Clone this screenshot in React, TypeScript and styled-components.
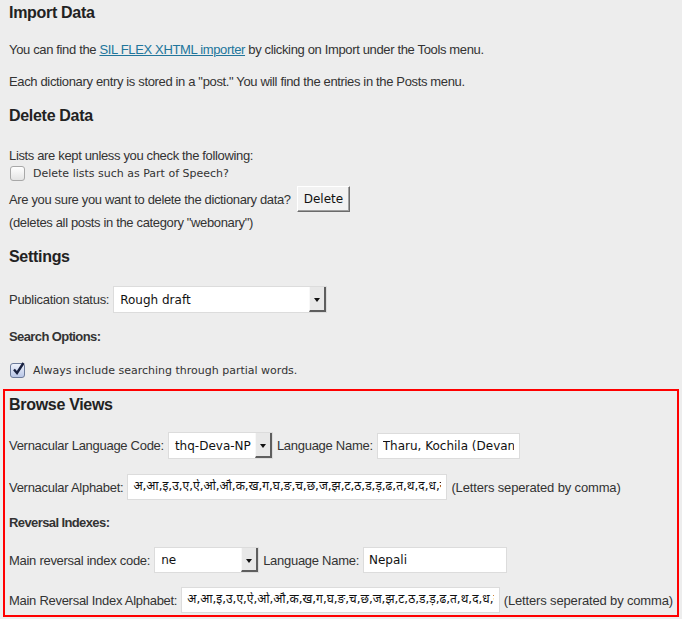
import React from 'react';
import styled, { createGlobalStyle } from 'styled-components';

const GlobalStyle = createGlobalStyle`
  body {
    margin: 0;
    background: #ededed;
    color: #333;
    font-family: 'Liberation Sans', Arial, sans-serif;
    font-size: 13px;
    letter-spacing: -0.35px;
  }
`;

const Page = styled.div`
  padding: 0 3px;
  width: 676px;
`;

const Section = styled.div`
  padding-left: 6px;
`;

const Heading = styled.h3<{ $top?: number }>`
  margin: ${p => p.$top ?? 0}px 0 0;
  height: 26px;
  line-height: 26px;
  font-size: 16px;
  font-weight: bold;
  letter-spacing: -0.3px;
  color: #222;
`;

const Line = styled.div<{ $h?: number; $top?: number }>`
  display: flex;
  align-items: center;
  gap: 4px;
  height: ${p => p.$h ?? 20}px;
  margin-top: ${p => p.$top ?? 0}px;
  white-space: nowrap;
`;

const SubTitle = styled(Line)`
  font-weight: bold;
  letter-spacing: -0.6px;
  color: #333;
`;

const Link = styled.a`
  color: #21759b;
  text-decoration: underline;
`;

const Label = styled.span`
  color: #333;
  letter-spacing: -0.28px;
`;

const CheckLabel = styled.label`
  display: flex;
  align-items: center;
  gap: 8px;
  font-family: 'DejaVu Sans', sans-serif;
  font-size: 11px;
  letter-spacing: 0;
  color: #333;
`;

const Box = styled.span<{ $checked?: boolean }>`
  width: 13px;
  height: 13px;
  margin-left: 1px;
  border: 1px solid ${p => (p.$checked ? '#6b7a99' : '#a8a8a8')};
  border-radius: 3px;
  background: ${p =>
    p.$checked
      ? 'linear-gradient(#eef2fb, #b9c6e6)'
      : 'linear-gradient(#ffffff, #e4e4e4)'};
  position: relative;
  svg {
    position: absolute;
    left: 0px;
    top: -3px;
  }
`;

const Button = styled.button`
  height: 26px;
  padding: 0 6px;
  margin-left: 2px;
  font-family: 'DejaVu Sans', sans-serif;
  font-size: 12px;
  letter-spacing: 0;
  color: #111;
  background: #f2f2f2;
  border: 1px solid;
  border-color: #ffffff #6b6b6b #6b6b6b #ffffff;
  box-shadow: inset -1px -1px 0 #a0a0a0;
`;

const Select = styled.div<{ $w: number; $h?: number }>`
  display: flex;
  width: ${p => p.$w}px;
  height: ${p => p.$h ?? 26}px;
  box-sizing: border-box;
  background: #fff;
  border: 1px solid #dcdcdc;
  font-family: 'DejaVu Sans', sans-serif;
  font-size: 12px;
  letter-spacing: 0;
  color: #111;
`;

const SelectValue = styled.span`
  flex: 1;
  padding-left: 6px;
  display: flex;
  align-items: center;
`;

const Arrow = styled.span`
  width: 14px;
  display: flex;
  align-items: center;
  justify-content: center;
  background: #e8e8e8;
  border-left: 1px solid #f8f8f8;
  border-right: 2px solid #5e5e5e;
  border-bottom: 2px solid #5e5e5e;
  &::after {
    content: '';
    border-left: 3px solid transparent;
    border-right: 3px solid transparent;
    border-top: 4px solid #111;
    margin-top: 3px;
  }
`;

const TextInput = styled.input<{ $w: number }>`
  width: ${p => p.$w}px;
  height: 26px;
  box-sizing: border-box;
  margin: 0;
  padding: 0 5px;
  background: #fff;
  border: 1px solid #dcdcdc;
  outline: none;
  font-family: 'DejaVu Sans', 'Noto Sans Devanagari', 'Lohit Devanagari', sans-serif;
  font-size: 12px;
  letter-spacing: 0;
  color: #111;
`;

const Frame = styled.div`
  margin-top: 10px;
  border: 2px solid #ff0000;
  padding: 1px 4px 2px 4px;
`;

const Hint = styled.span`
  color: #333;
  letter-spacing: -0.15px;
`;

const deva =
  'अ,आ,इ,उ,ए,ऐ,ओ,औ,क,ख,ग,घ,ङ,च,छ,ज,झ,ट,ठ,ड,ड़,ढ,त,थ,द,ध,न,प,फ,ब,भ,म,य,र,ल,व,श,स,ह';

const Check = () => (
  <svg width="15" height="15" viewBox="0 0 15 15">
    <path d="M3 8.5 L6 12 L12.5 2" fill="none" stroke="#1a2240" strokeWidth="2.4" />
  </svg>
);

export default function App() {
  return (
    <Page>
      <GlobalStyle />
      <Section>
        <Heading>Import Data</Heading>
        <Line $top={13}>
          <span>
            You can find the <Link href="#">SIL FLEX XHTML importer</Link> by clicking on Import
            under the Tools menu.
          </span>
        </Line>
        <Line $top={12}>Each dictionary entry is stored in a "post." You will find the entries in the Posts menu.</Line>

        <Heading $top={12}>Delete Data</Heading>
        <Line $top={17} $h={18}>Lists are kept unless you check the following:</Line>
        <Line $h={18}>
          <CheckLabel>
            <Box />
            Delete lists such as Part of Speech?
          </CheckLabel>
        </Line>
        <Line $top={4} $h={26}>
          <span>Are you sure you want to delete the dictionary data?</span>
          <Button>Delete</Button>
        </Line>
        <Line $top={1} $h={18}>(deletes all posts in the category "webonary")</Line>

        <Heading $top={13}>Settings</Heading>
        <Line $top={16} $h={27}>
          <Label>Publication status:</Label>
          <Select $w={214} $h={27}>
            <SelectValue>Rough draft</SelectValue>
            <Arrow />
          </Select>
        </Line>
        <SubTitle $top={14} $h={18}>Search Options:</SubTitle>
        <Line $top={16} $h={18}>
          <CheckLabel>
            <Box $checked>
              <Check />
            </Box>
            Always include searching through partial words.
          </CheckLabel>
        </Line>
      </Section>

      <Frame>
        <Heading>Browse Views</Heading>
        <Line $top={14} $h={27}>
          <Label>Vernacular Language Code:</Label>
          <Select $w={105} $h={27}>
            <SelectValue>thq-Deva-NP</SelectValue>
            <Arrow />
          </Select>
          <Label>Language Name:</Label>
          <TextInput $w={143} readOnly value="Tharu, Kochila (Devanagari)" />
        </Line>
        <Line $top={15} $h={26}>
          <Label>Vernacular Alphabet:</Label>
          <TextInput $w={320} readOnly value={deva} />
          <Hint>(Letters seperated by comma)</Hint>
        </Line>
        <SubTitle $top={13} $h={18}>Reversal Indexes:</SubTitle>
        <Line $top={16} $h={26}>
          <Label>Main reversal index code:</Label>
          <Select $w={105}>
            <SelectValue>ne</SelectValue>
            <Arrow />
          </Select>
          <Label>Language Name:</Label>
          <TextInput $w={144} readOnly value="Nepali" />
        </Line>
        <Line $top={14} $h={26}>
          <Label>Main Reversal Index Alphabet:</Label>
          <TextInput $w={323} readOnly value={deva} />
          <Hint>(Letters seperated by comma)</Hint>
        </Line>
      </Frame>
    </Page>
  );
}
